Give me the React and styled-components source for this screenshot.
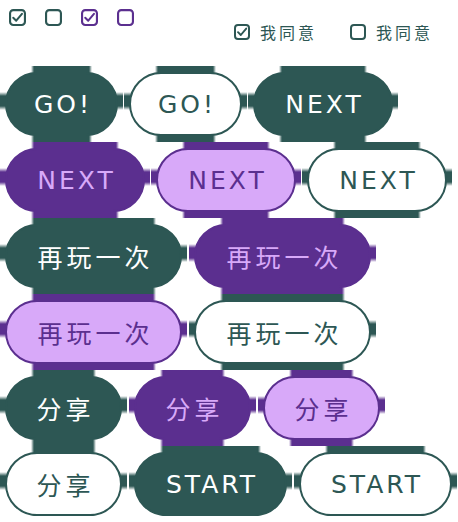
import React from 'react';
import styled, { createGlobalStyle, css } from 'styled-components';

const GREEN = '#2d5754';
const PURPLE = '#5b2f8f';
const LILAC = '#d8a9f9';

const GlobalStyle = createGlobalStyle`
    body {
        margin: 0;
        background: #fff;
        font-family: "Noto Sans", "Noto Sans CJK SC", sans-serif;
    }
`;

const Page = styled.div`
    width: 458px;
`;

const Header = styled.div`
    display: flex;
    align-items: flex-start;
    height: 72px;
    box-sizing: border-box;
    padding: 9px 25px 0 9px;
`;

const SmallChecks = styled.div`
    display: flex;
    gap: 19px;
`;

const Agreements = styled.div`
    display: flex;
    gap: 33px;
    margin-left: auto;
    padding-top: 15px;
`;

const Agree = styled.label`
    display: flex;
    align-items: center;
    gap: 10px;
    color: ${GREEN};
    font-family: "Noto Sans CJK SC", sans-serif;
    font-size: 16px;
    letter-spacing: 3px;
    line-height: 16px;
`;

const Buttons = styled.div`
    display: flex;
    flex-direction: column;
    gap: 12px;
    padding: 0 5px;
    position: relative;
    isolation: isolate;
`;

const Row = styled.div`
    display: flex;
    gap: ${(p) => p.$gap || 12}px;
`;

const decoColor = (v) => (v === 'purple' || v === 'light' ? PURPLE : GREEN);

const variants = {
    green: css`
        background: ${GREEN};
        border-color: ${GREEN};
        color: #fff;
    `,
    purple: css`
        background: ${PURPLE};
        border-color: ${PURPLE};
        color: ${LILAC};
    `,
    light: css`
        background: ${LILAC};
        border-color: ${PURPLE};
        color: ${PURPLE};
    `,
    outline: css`
        background: #fff;
        border-color: ${GREEN};
        color: ${GREEN};
    `,
};

const PixelButton = styled.button`
    position: relative;
    box-sizing: border-box;
    width: ${(p) => p.$w}px;
    height: 64px;
    padding: 0 0 0 ${(p) => (p.$cjk ? 4 : 3)}px;
    border: 2px solid;
    border-radius: 32px;
    font-family: "DejaVu Sans", "Noto Sans CJK SC", sans-serif;
    font-size: 25px;
    font-weight: 400;
    letter-spacing: ${(p) => (p.$cjk ? '4px' : '3px')};
    text-align: center;
    cursor: pointer;
    white-space: nowrap;
    ${(p) => variants[p.$variant]}

    &::before {
        content: '';
        position: absolute;
        z-index: -1;
        top: -8px;
        bottom: -8px;
        left: 24px;
        right: 24px;
        background: linear-gradient(
            to right,
            transparent 0,
            ${(p) => decoColor(p.$variant)} 3px,
            ${(p) => decoColor(p.$variant)} calc(100% - 3px),
            transparent 100%
        );
    }

    &::after {
        content: '';
        position: absolute;
        z-index: -1;
        top: 18px;
        height: 18px;
        left: -7px;
        right: -7px;
        background: linear-gradient(
            to bottom,
            transparent 0,
            ${(p) => decoColor(p.$variant)} 4px,
            ${(p) => decoColor(p.$variant)} calc(100% - 4px),
            transparent 100%
        );
    }
`;

const CheckBox = ({ checked, color, size = 16 }) => (
    <svg width={size} height={size} viewBox="0 0 16 16">
        <rect x="1" y="1" width="14" height="14" rx="3" fill="none" stroke={color} strokeWidth="2" />
        {checked && (
            <path d="M4 8.2 L6.8 11 L12.2 4.6" fill="none" stroke={color} strokeWidth="1.9" strokeLinecap="round" strokeLinejoin="round" />
        )}
    </svg>
);

const widths = { 'GO!': 113, NEXT: 140, '再玩一次': 177, '分享': 117, START: 153 };

const rows = [
    { gap: 11, items: [['GO!', 'green'], ['GO!', 'outline'], ['NEXT', 'green']] },
    { gap: 11, items: [['NEXT', 'purple'], ['NEXT', 'light'], ['NEXT', 'outline']] },
    { gap: 12, items: [['再玩一次', 'green'], ['再玩一次', 'purple']] },
    { gap: 12, items: [['再玩一次', 'light'], ['再玩一次', 'outline']] },
    { gap: 12, items: [['分享', 'green'], ['分享', 'purple'], ['分享', 'light']] },
    { gap: 12, items: [['分享', 'outline'], ['START', 'green'], ['START', 'outline']] },
];

const isCjk = (s) => /[\u4e00-\u9fff]/.test(s);

const App = () => {
    return (
        <Page>
            <GlobalStyle />
            <Header>
                <SmallChecks>
                    <CheckBox checked color={GREEN} size={17} />
                    <CheckBox color={GREEN} size={17} />
                    <CheckBox checked color={PURPLE} size={17} />
                    <CheckBox color={PURPLE} size={17} />
                </SmallChecks>
                <Agreements>
                    <Agree>
                        <CheckBox checked color={GREEN} />
                        我同意
                    </Agree>
                    <Agree>
                        <CheckBox color={GREEN} />
                        我同意
                    </Agree>
                </Agreements>
            </Header>
            <Buttons>
                {rows.map((row, i) => (
                    <Row key={i} $gap={row.gap}>
                        {row.items.map(([label, variant], j) => (
                            <PixelButton
                                key={j}
                                $variant={variant}
                                $cjk={isCjk(label)}
                                $w={widths[label]}
                            >
                                {label}
                            </PixelButton>
                        ))}
                    </Row>
                ))}
            </Buttons>
        </Page>
    );
};

export default App;
